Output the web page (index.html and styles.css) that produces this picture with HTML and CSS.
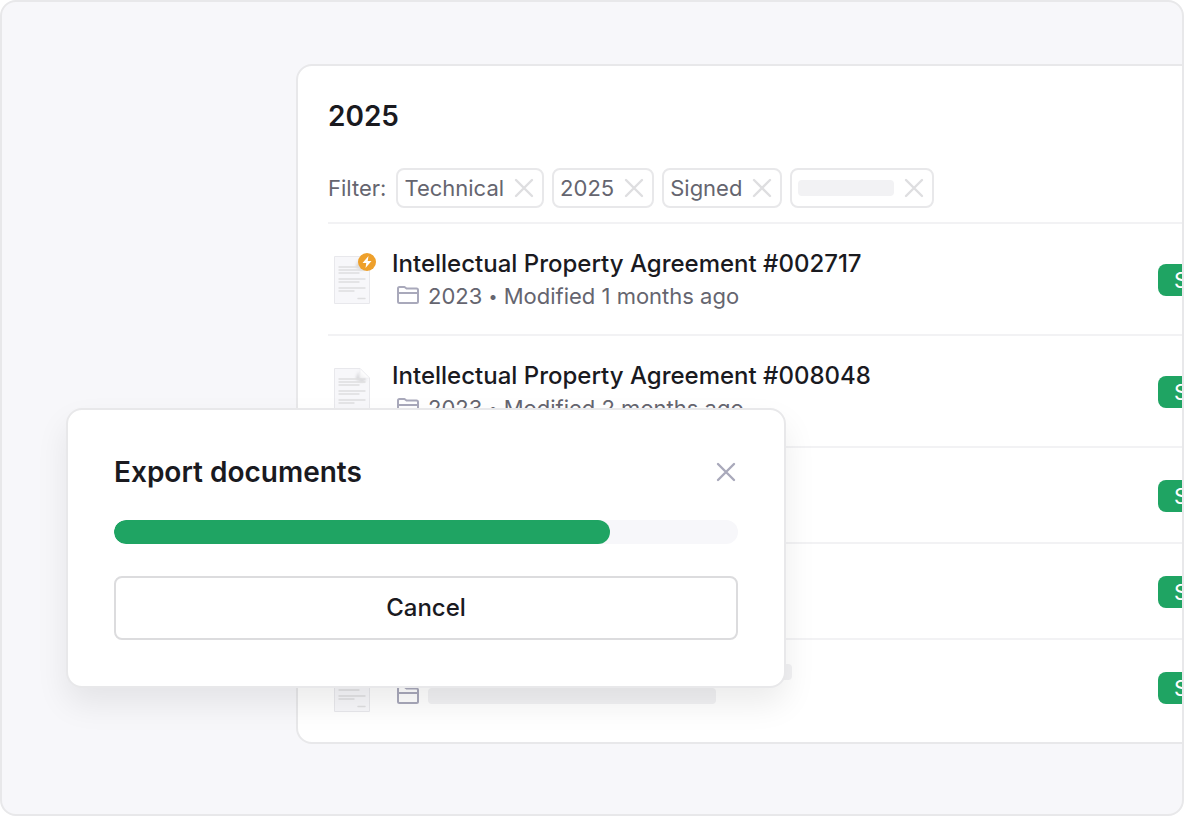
FILE: index.html
```html
<!DOCTYPE html>
<html lang="en">
<head>
    <meta charset="UTF-8">
    <meta name="viewport" content="width=device-width, initial-scale=1.0">
    <title>Export documents</title>
    <link rel="stylesheet" href="styles.css">
</head>
<body>
    <!-- Shared icons -->
    <svg class="sprite" aria-hidden="true">
        <defs>
            <linearGradient id="fold" x1="1" y1="0" x2="0" y2="1">
                <stop offset="0.5" stop-color="#ffffff"/>
                <stop offset="1" stop-color="#f0f0f2"/>
            </linearGradient>
            <filter id="soft" x="-50%" y="-50%" width="200%" height="200%">
                <feGaussianBlur stdDeviation="1.5"/>
            </filter>
        </defs>
        <symbol id="icon-close" viewBox="0 0 24 24">
            <path d="M4 4l16 16M20 4L4 20" fill="none" stroke="currentColor" stroke-width="2.4" stroke-linecap="round"/>
        </symbol>
        <symbol id="icon-folder" viewBox="0 0 24 24">
            <path d="M2 17.5V4.5Q2 3 3.5 3H8.5L10.5 4.5H20.5Q22 4.5 22 6V17.5Q22 19 20.5 19H3.5Q2 19 2 17.5ZM2 9H22" fill="none" stroke="currentColor" stroke-width="2" stroke-linejoin="round"/>
        </symbol>
        <symbol id="icon-lines" viewBox="0 0 36 48">
            <path d="M5 11H31M5 14H31M5 17H25M5 23H31M5 26H25M5 32H31M5 35H20M24 42.5H31" fill="none" stroke="#dedee0" stroke-width="1.4" stroke-linecap="round"/>
        </symbol>
        <symbol id="icon-doc" viewBox="0 0 36 48">
            <path d="M.5 .5H26L35.5 10V47.5H.5Z" fill="#f7f7fa" stroke="#e8e8ec"/>
            <path d="M25 3V11H33L28 14L22 11Z" fill="#b4b4b8" opacity=".7" filter="url(#soft)"/>
            <use href="#icon-lines"/>
            <path d="M26 .5V8.5Q26 10 27.5 10H35.5Z" fill="url(#fold)" stroke="#e8e8ec" stroke-width=".5"/>
        </symbol>
        <symbol id="icon-bolt" viewBox="0 0 18 18">
            <circle cx="9" cy="9" r="9" fill="#eea02b"/>
            <path d="M10.5 3L4.5 10H8.3L7.5 15L13.5 8H9.7Z" fill="#fff"/>
        </symbol>
    </svg>

    <div class="frame">
        <main class="panel">
            <h1 class="panel-title">2025</h1>

            <div class="filter-bar">
                <span class="filter-label">Filter:</span>
                <div class="chip">Technical
                    <button class="chip-remove" aria-label="Remove filter Technical"><svg class="icon"><use href="#icon-close"/></svg></button>
                </div>
                <div class="chip">2025
                    <button class="chip-remove" aria-label="Remove filter 2025"><svg class="icon"><use href="#icon-close"/></svg></button>
                </div>
                <div class="chip">Signed
                    <button class="chip-remove" aria-label="Remove filter Signed"><svg class="icon"><use href="#icon-close"/></svg></button>
                </div>
                <div class="chip"><span class="skeleton skeleton-chip"></span>
                    <button class="chip-remove" aria-label="Remove filter"><svg class="icon"><use href="#icon-close"/></svg></button>
                </div>
            </div>

            <ul class="doc-list">
                <li class="doc-row">
                    <div class="doc-thumb">
                        <svg class="doc-icon"><use href="#icon-doc"/></svg>
                        <svg class="doc-bolt"><use href="#icon-bolt"/></svg>
                    </div>
                    <div class="doc-info">
                        <h2 class="doc-name">Intellectual Property Agreement #002717</h2>
                        <div class="doc-meta"><svg class="icon"><use href="#icon-folder"/></svg><span>2023 <span class="dot">•</span> Modified 1 months ago</span></div>
                    </div>
                    <span class="badge">Signed</span>
                </li>
                <li class="doc-row">
                    <div class="doc-thumb"><svg class="doc-icon"><use href="#icon-doc"/></svg></div>
                    <div class="doc-info">
                        <h2 class="doc-name">Intellectual Property Agreement #008048</h2>
                        <div class="doc-meta"><svg class="icon"><use href="#icon-folder"/></svg><span>2023 <span class="dot">•</span> Modified 2 months ago</span></div>
                    </div>
                    <span class="badge">Signed</span>
                </li>
                <li class="doc-row">
                    <div class="doc-thumb"><svg class="doc-icon"><use href="#icon-doc"/></svg></div>
                    <div class="doc-info">
                        <div class="skeleton skeleton-meta"></div>
                        <div class="doc-meta"><svg class="icon"><use href="#icon-folder"/></svg><span class="skeleton skeleton-meta"></span></div>
                    </div>
                    <span class="badge">Signed</span>
                </li>
                <li class="doc-row">
                    <div class="doc-thumb"><svg class="doc-icon"><use href="#icon-doc"/></svg></div>
                    <div class="doc-info">
                        <div class="skeleton skeleton-meta"></div>
                        <div class="doc-meta"><svg class="icon"><use href="#icon-folder"/></svg><span class="skeleton skeleton-meta"></span></div>
                    </div>
                    <span class="badge">Signed</span>
                </li>
                <li class="doc-row">
                    <div class="doc-thumb"><svg class="doc-icon"><use href="#icon-doc"/></svg></div>
                    <div class="doc-info">
                        <div class="skeleton skeleton-name"></div>
                        <div class="doc-meta"><svg class="icon"><use href="#icon-folder"/></svg><span class="skeleton skeleton-meta"></span></div>
                    </div>
                    <span class="badge">Signed</span>
                </li>
            </ul>
        </main>

        <div class="dialog" role="dialog" aria-labelledby="dialog-title">
            <div class="dialog-header">
                <h2 class="dialog-title" id="dialog-title">Export documents</h2>
                <button class="dialog-close" aria-label="Close"><svg class="icon"><use href="#icon-close"/></svg></button>
            </div>
            <progress class="progress" value="496" max="624" aria-labelledby="dialog-title"></progress>
            <button class="cancel">Cancel</button>
        </div>
    </div>
</body>
</html>
```
FILE: styles.css
```css
* {
    box-sizing: border-box;
}
body {
    margin: 0;
    background: #fff;
    color: #1a1a1f;
    font-family: Inter, "Liberation Sans", sans-serif;
    font-size: 22px;
    line-height: 32px;
}
h1, h2, ul {
    margin: 0;
    padding: 0;
}
button {
    font: inherit;
    color: inherit;
    background: none;
    border: none;
    padding: 0;
    cursor: pointer;
}
.sprite {
    position: absolute;
    width: 0;
    height: 0;
}
.icon {
    display: block;
    flex: none;
    width: 24px;
    height: 24px;
}
.frame {
    position: relative;
    min-height: 100vh;
    padding: 62px 0 70px 294px;
    background: #f7f7fa;
    border: 2px solid #e8e8ea;
    border-radius: 16px;
    overflow: hidden;
}

/* the panel runs past the right edge of the frame */
.panel {
    margin-right: -112px;
    padding: 30px;
    background: #fff;
    border: 2px solid #e8e8ea;
    border-radius: 16px;
}
.panel-title {
    margin-bottom: 32px;
    font-size: 28px;
    font-weight: 600;
    line-height: 40px;
}
.filter-bar {
    display: flex;
    align-items: center;
    gap: 8px;
    margin-bottom: 14px;
    color: #65656f;
}
.filter-label {
    padding-right: 2px;
}
.chip {
    display: flex;
    align-items: center;
    gap: 8px;
    height: 40px;
    padding: 0 6px;
    border: 2px solid #e8e8ea;
    border-radius: 8px;
}
.chip-remove {
    color: #dedee0;
}

.doc-list {
    list-style: none;
}
.doc-row {
    display: flex;
    align-items: center;
    gap: 16px;
    padding: 24px 0 22px;
    border-top: 2px solid #f2f2f4;
}
.doc-row:last-child {
    padding-bottom: 0;
}
.doc-thumb {
    position: relative;
    flex: none;
    width: 48px;
    height: 48px;
}
.doc-icon {
    display: block;
    width: 36px;
    height: 48px;
    margin: 0 auto;
}
.doc-bolt {
    position: absolute;
    top: -3px;
    right: 0;
    width: 18px;
    height: 18px;
}
.doc-info {
    flex: 1;
}
.doc-name {
    font-size: 24px;
    font-weight: 500;
    line-height: 32px;
}
.doc-meta {
    display: flex;
    align-items: center;
    gap: 8px;
    height: 32px;
    padding-left: 4px;
    color: #65656f;
}
.doc-meta .icon {
    color: #a9a9bb;
}
.dot {
    font-size: 16px;
    line-height: 16px;
    vertical-align: 2px;
}
.badge {
    width: 104px;
    padding-left: 16px;
    background: #1fa463;
    border-radius: 8px;
    color: #fff;
}
.skeleton {
    height: 16px;
    background: #f2f2f4;
    border-radius: 4px;
}
.skeleton-chip {
    width: 96px;
}
.skeleton-name {
    width: 400px;
}
.skeleton-meta {
    width: 288px;
}

.dialog {
    position: absolute;
    top: 406px;
    left: 64px;
    width: 720px;
    padding: 46px;
    background: #fff;
    border: 2px solid #e8e8ea;
    border-radius: 16px;
    box-shadow: 0 16px 32px rgba(0, 0, 0, 0.08);
}
.dialog-header {
    display: flex;
    justify-content: space-between;
    align-items: center;
    margin-bottom: 32px;
}
.dialog-title {
    font-size: 28px;
    font-weight: 600;
    line-height: 32px;
}
.dialog-close {
    color: #a9a9bb;
}
.progress {
    display: block;
    width: 100%;
    height: 24px;
    margin-bottom: 32px;
    appearance: none;
    border: none;
    border-radius: 12px;
    background: #f7f7fa;
    overflow: hidden;
}
.progress::-webkit-progress-bar {
    background: #f7f7fa;
}
.progress::-webkit-progress-value {
    background: #1fa463;
    border-radius: 12px;
}
.cancel {
    width: 100%;
    height: 64px;
    border: 2px solid #dcdcde;
    border-radius: 8px;
    font-size: 24px;
    font-weight: 500;
}
```
